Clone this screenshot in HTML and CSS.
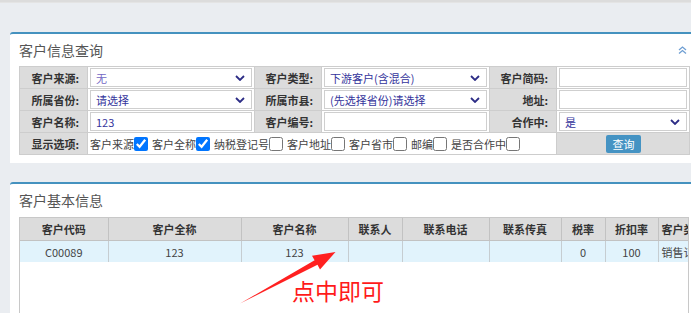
FILE: index.html
```html
<!DOCTYPE html>
<html lang="zh-CN">
<head>
<meta charset="utf-8">
<title>客户信息查询</title>
<link rel="stylesheet" href="styles.css">
</head>
<body>
<div class="topbar"></div>
<div class="page">
  <section class="panel panel-query">
    <div class="panel-head">
      <h2>客户信息查询</h2>
      <svg class="collapse" width="9" height="8" viewBox="0 0 9 8"><polyline points="1,4 4.5,1 8,4" /><polyline points="1,7.5 4.5,4.5 8,7.5" /></svg>
    </div>
    <table class="qtable">
      <colgroup>
        <col class="c-l1"><col class="c-i1"><col class="c-l2"><col class="c-i2"><col class="c-l3"><col class="c-i3">
      </colgroup>
      <tr>
        <th>客户来源:</th>
        <td><div class="field sel light"><span>无</span><svg class="chev" viewBox="0 0 10 6"><polyline points="1,1 5,5 9,1"/></svg></div></td>
        <th>客户类型:</th>
        <td><div class="field sel"><span>下游客户(含混合)</span><svg class="chev" viewBox="0 0 10 6"><polyline points="1,1 5,5 9,1"/></svg></div></td>
        <th>客户简码:</th>
        <td><div class="field"></div></td>
      </tr>
      <tr>
        <th>所属省份:</th>
        <td><div class="field sel"><span>请选择</span><svg class="chev" viewBox="0 0 10 6"><polyline points="1,1 5,5 9,1"/></svg></div></td>
        <th>所属市县:</th>
        <td><div class="field sel"><span>(先选择省份)请选择</span><svg class="chev" viewBox="0 0 10 6"><polyline points="1,1 5,5 9,1"/></svg></div></td>
        <th>地址:</th>
        <td><div class="field"></div></td>
      </tr>
      <tr>
        <th>客户名称:</th>
        <td><div class="field"><span>123</span></div></td>
        <th>客户编号:</th>
        <td><div class="field"></div></td>
        <th>合作中:</th>
        <td><div class="field sel"><span>是</span><svg class="chev" viewBox="0 0 10 6"><polyline points="1,1 5,5 9,1"/></svg></div></td>
      </tr>
      <tr>
        <th>显示选项:</th>
        <td colspan="4" class="opts"><label class="opt">客户来源<input type="checkbox" checked></label><label class="opt">客户全称<input type="checkbox" checked></label><label class="opt">纳税登记号<input type="checkbox"></label><label class="opt">客户地址<input type="checkbox"></label><label class="opt">客户省市<input type="checkbox"></label><label class="opt">邮编<input type="checkbox"></label><label class="opt">是否合作中<input type="checkbox"></label></td>
        <td class="btncell"><button class="btn">查询</button></td>
      </tr>
    </table>
  </section>

  <section class="panel panel-grid">
    <div class="panel-head">
      <h2>客户基本信息</h2>
    </div>
    <div class="grid">
      <table class="gtable">
        <colgroup>
          <col class="g1"><col class="g2"><col class="g3"><col class="g4"><col class="g5"><col class="g6"><col class="g7"><col class="g8"><col class="g9">
        </colgroup>
        <tr>
          <th>客户代码</th><th>客户全称</th><th>客户名称</th><th>联系人</th><th>联系电话</th><th>联系传真</th><th>税率</th><th>折扣率</th><th class="left">客户类型</th>
        </tr>
        <tr class="sel-row">
          <td>C00089</td><td>123</td><td>123</td><td></td><td></td><td></td><td>0</td><td>100</td><td class="left">销售订货</td>
        </tr>
      </table>
    </div>
  </section>
</div>

<svg class="arrow" width="691" height="313" viewBox="0 0 691 313">
  <polygon points="240,303.5 317.5,264.8 320,269.4 335.5,252 312,255.8 314.6,260.3" />
</svg>
<div class="note">点中即可</div>
</body>
</html>
```

FILE: styles.css
```css
html, body {
  margin: 0;
  padding: 0;
}
body {
  position: relative;
  height: 313px;
  overflow: hidden;
  background: #eaedf1;
  font-family: "Noto Sans CJK SC", "Noto Sans", sans-serif;
  font-size: 11px;
  color: #333;
}
.topbar {
  height: 2px;
  background: #dcdcdc;
  border-bottom: 1px solid #e4e4e4;
}
.page {
  width: 688px;
  padding: 29px 0 0 10px;
}
.panel {
  background: #fff;
  border-top: 2px solid #4592bf;
  border-radius: 3px 3px 0 0;
  padding: 0 9px 8px 9px;
}
.panel-grid {
  margin-top: 19px;
  padding-bottom: 0;
}
.panel-head {
  height: 32px;
  display: flex;
  align-items: center;
  justify-content: space-between;
}
.panel-head h2 {
  margin: 0;
  font-size: 14px;
  font-weight: normal;
  color: #555;
  line-height: 18px;
}
.collapse {
  margin-right: 2px;
  margin-top: -1px;
}
.collapse polyline {
  fill: none;
  stroke: #6f9fd3;
  stroke-width: 1.3;
}

/* query table */
.qtable {
  width: 670px;
  table-layout: fixed;
  border-collapse: collapse;
  border: 1px solid #cdcdcd;
}
.c-l1 { width: 68px; }
.c-i1 { width: 167px; }
.c-l2 { width: 67px; }
.c-i2 { width: 168px; }
.c-l3 { width: 67px; }
.c-i3 { width: 133px; }
.qtable th {
  background: #dcdcdc;
  border: 1px solid #cdcdcd;
  text-align: right;
  font-weight: bold;
  color: #333;
  padding: 0 8px 0 0;
  height: 21px;
  white-space: nowrap;
}
.qtable td {
  border: 1px solid #cdcdcd;
  padding: 1px 2px;
  background: #fff;
  height: 19px;
}
.field {
  height: 17px;
  border: 1px solid #cfcfcf;
  display: flex;
  align-items: center;
  justify-content: space-between;
  padding: 0 5px;
  color: #34349c;
  white-space: nowrap;
  overflow: hidden;
}
.field.light {
  color: #7367c4;
}
.chev {
  width: 10px;
  height: 6px;
  flex: none;
  margin-right: 1px;
}
.chev polyline {
  fill: none;
  stroke: #2c2c86;
  stroke-width: 1.8;
}
.qtable td.opts {
  padding: 0 0 0 2px;
  white-space: nowrap;
}
.opt {
  display: inline-flex;
  align-items: center;
  color: #444;
}
.opt input {
  width: 14px;
  height: 14px;
  margin: 0 4px 0 0;
}
.qtable td.btncell {
  background: #dcdcdc;
  text-align: center;
  padding: 0;
}
.btn {
  font-family: inherit;
  font-size: 11px;
  color: #fff;
  background: #4593c3;
  border: none;
  border-radius: 2px;
  width: 35px;
  height: 18px;
  padding: 0;
  line-height: 18px;
  margin-left: 1px;
}

/* grid */
.grid {
  margin-top: 1px;
  height: 96px;
  border: 1px solid #c8c8c8;
  border-bottom: none;
  overflow: hidden;
}
.gtable {
  width: 728px;
  table-layout: fixed;
  border-collapse: collapse;
}
.g1 { width: 88px; }
.g2 { width: 133px; }
.g3 { width: 107px; }
.g4 { width: 54px; }
.g5 { width: 87px; }
.g6 { width: 72px; }
.g7 { width: 44px; }
.g8 { width: 53px; }
.g9 { width: 90px; }
.gtable th {
  background: #dcdcdc;
  height: 22px;
  border-right: 1px solid #c2c2c2;
  border-bottom: 1px solid #c2c2c2;
  font-weight: bold;
  color: #333;
  padding: 0;
  text-align: center;
  white-space: nowrap;
}
.gtable td {
  background: #e1f3fc;
  height: 21px;
  border-right: 1px solid #c6cdd1;
  color: #444;
  padding: 0;
  text-align: center;
  white-space: nowrap;
}
.gtable .left {
  text-align: left;
  padding-left: 3px;
}

/* annotation */
.arrow {
  position: absolute;
  left: 0;
  top: 0;
}
.arrow polygon {
  fill: #ff2020;
}
.note {
  position: absolute;
  left: 292px;
  top: 276px;
  font-size: 23px;
  line-height: 28px;
  color: #ff1a1a;
}
```
